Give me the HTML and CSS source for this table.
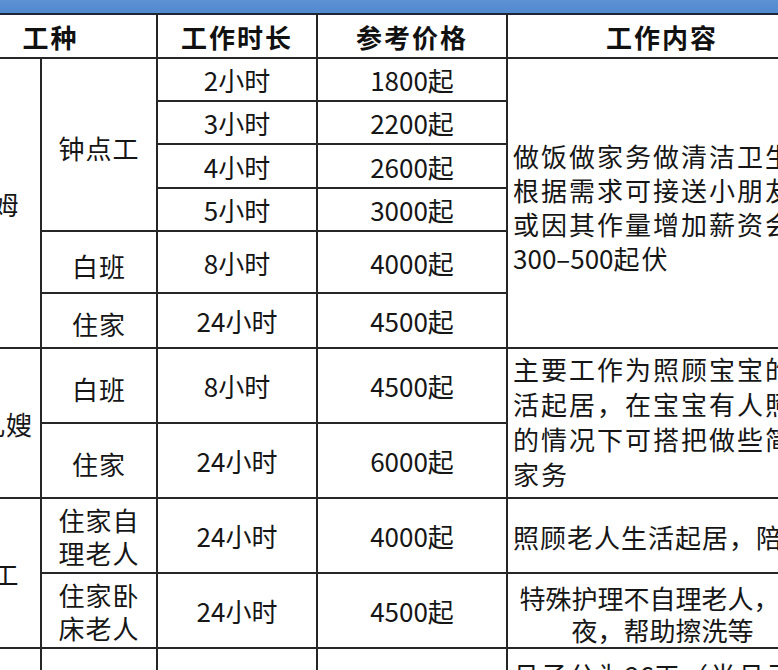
FILE: index.html
```html
<!DOCTYPE html>
<html lang="zh-CN">
<head>
<meta charset="utf-8">
<title>家政服务价格表</title>
<link rel="stylesheet" href="styles.css">
</head>
<body>
<div class="band"></div>
<table class="price">
  <colgroup>
    <col class="c1"><col class="c2"><col class="c3"><col class="c4"><col class="c5">
  </colgroup>
  <thead>
    <tr class="head">
      <th colspan="2">工种</th>
      <th>工作时长</th>
      <th>参考价格</th>
      <th>工作内容</th>
    </tr>
  </thead>
  <tbody>
    <tr class="r43">
      <td rowspan="6" class="kind">保姆</td>
      <td rowspan="4" class="sub">钟点工</td>
      <td>2小时</td><td>1800起</td>
      <td rowspan="6" class="desc wide">做饭做家务做清洁卫生，<br>根据需求可接送小朋友，<br>或因其作量增加薪资会有<br><span class="num">300–500</span>起伏</td>
    </tr>
    <tr class="r43"><td>3小时</td><td>2200起</td></tr>
    <tr class="r44"><td>4小时</td><td>2600起</td></tr>
    <tr class="r43"><td>5小时</td><td>3000起</td></tr>
    <tr class="r62"><td class="sub">白班</td><td>8小时</td><td>4000起</td></tr>
    <tr class="r55"><td class="sub">住家</td><td>24小时</td><td>4500起</td></tr>
    <tr class="r75">
      <td rowspan="2" class="kind">育儿嫂</td>
      <td class="sub">白班</td><td>8小时</td><td>4500起</td>
      <td rowspan="2" class="desc baby">主要工作为照顾宝宝的生<br>活起居，在宝宝有人照顾<br>的情况下可搭把做些简单<br>家务</td>
    </tr>
    <tr class="r75"><td class="sub">住家</td><td>24小时</td><td>6000起</td></tr>
    <tr class="r75">
      <td rowspan="2" class="kind">护工</td>
      <td class="sub two">住家自<br>理老人</td><td>24小时</td><td>4000起</td>
      <td class="desc single">照顾老人生活起居，陪护</td>
    </tr>
    <tr class="r75">
      <td class="sub two">住家卧<br>床老人</td><td>24小时</td><td>4500起</td>
      <td class="desc center">特殊护理不自理老人，陪<br>夜，帮助擦洗等</td>
    </tr>
    <tr class="r150">
      <td class="kind">月嫂</td>
      <td class="sub">月子</td><td>26天</td><td>8800起</td>
      <td class="desc">月子分为<span class="num">26</span>天（半月子13<br>天），照顾产妇和新生儿<br>的饮食起居，做月子餐，<br>产后恢复指导</td>
    </tr>
  </tbody>
</table>
</body>
</html>
```

FILE: styles.css
```css
html, body {
  margin: 0;
  padding: 0;
  overflow: hidden;
  background: #ffffff;
}

body {
  width: 778px;
  height: 670px;
  font-family: "Noto Sans CJK SC", "Noto Sans", sans-serif;
  color: #161616;
}

.band {
  height: 13px;
  background: linear-gradient(180deg, #5d92d3 0%, #5189cf 100%);
}

.price {
  border-collapse: collapse;
  table-layout: fixed;
  margin-left: -57px;
  width: 873px;
}

.c1 { width: 97px; }
.c2 { width: 116px; }
.c3 { width: 160px; }
.c4 { width: 190px; }
.c5 { width: 310px; }

.price th,
.price td {
  border: 2px solid #262626;
  padding: 0 2px;
  text-align: center;
  vertical-align: middle;
  font-size: 26px;
  line-height: 33px;
  letter-spacing: 0;
  white-space: nowrap;
  font-weight: 400;
}

.price th {
  border-top-color: #1c2638;
  font-weight: 700;
  font-size: 26px;
  letter-spacing: 2px;
  color: #111111;
}

.head { height: 44px; }
.r43 { height: 43px; }
.r44 { height: 44px; }
.r62 { height: 62px; }
.r55 { height: 55px; }
.r75 { height: 75px; }
.r150 { height: 156px; }

.price td.kind {
  padding: 0;
  letter-spacing: 1px;
}

.price td.sub {
  padding-top: 6px;
  letter-spacing: 1px;
}

.price td.sub.two {
  padding-top: 0;
  line-height: 33px;
}

.price td.desc {
  text-align: left;
  padding: 2px 4px 0 5px;
  line-height: 35px;
  letter-spacing: 2px;
}

.price td.desc.wide {
  line-height: 34px;
  padding-top: 7px;
}

.price td.desc.baby {
  padding-top: 0;
  padding-bottom: 4px;
}

.num {
  letter-spacing: 0;
}

.price td.desc.single {
  letter-spacing: 1px;
}

.price td.desc.center {
  text-align: center;
  letter-spacing: 0;
  line-height: 32px;
  padding-top: 6px;
}
```
